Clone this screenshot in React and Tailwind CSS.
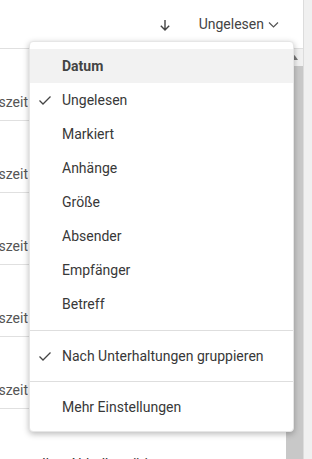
import React from 'react';

const rows = [0, 1, 2, 3, 4];

const menuItems = [
  { label: 'Datum', active: true },
  { label: 'Ungelesen', checked: true },
  { label: 'Markiert' },
  { label: 'Anhänge' },
  { label: 'Größe' },
  { label: 'Absender' },
  { label: 'Empfänger' },
  { label: 'Betreff' },
];

function Check() {
  return (
    <svg width="14" height="14" viewBox="0 0 14 14" className="absolute left-[8px] top-1/2 -translate-y-1/2">
      <path d="M1.5 7.5 L5 11 L12.5 3.5" fill="none" stroke="#444" strokeWidth="1.3" />
    </svg>
  );
}

function MenuItem({ label, active, checked }) {
  return (
    <div
      className={
        'relative h-[34px] flex items-center pl-[32px] text-[14px] ' +
        (active ? 'bg-[#f2f2f2] font-bold text-[#444]' : 'text-[#383838]')
      }
    >
      {checked && <Check />}
      {label}
    </div>
  );
}

export default function App() {
  return (
    <div
      className="relative h-[459px] w-[312px] overflow-hidden bg-white flex"
      style={{ fontFamily: 'Roboto, "Liberation Sans", sans-serif' }}
    >
      {/* Main column */}
      <div className="flex-1 flex flex-col min-w-0">
        {/* Header */}
        <div className="h-[49px] shrink-0 border-b border-[#e0e0e0] flex items-center justify-end pr-[24px] text-[14px] text-[#444]">
          <svg width="12" height="12" viewBox="0 0 12 12" className="mr-[28px] mt-[1px]">
            <path d="M6 1 V11 M1.8 6.8 L6 11 L10.2 6.8" fill="none" stroke="#444" strokeWidth="1.4" />
          </svg>
          <span>Ungelesen</span>
          <svg width="11" height="11" viewBox="0 0 11 11" className="ml-[4px] mt-[1px]">
            <path d="M1 3.5 L5.5 8 L10 3.5" fill="none" stroke="#555" strokeWidth="1.2" />
          </svg>
        </div>

        {/* Body */}
        <div className="flex-1 flex min-h-0">
          <div className="flex-1 flex flex-col">
            {rows.map((r) => (
              <div key={r} className="h-[72px] shrink-0 border-b border-[#e0e0e0] flex items-end pb-[8px]">
                <div className="w-[28px] overflow-hidden flex justify-end whitespace-nowrap text-[14px] leading-[20px] text-[#555]">
                  Bearbeitungszeit
                </div>
              </div>
            ))}
            <div className="pl-[42px] pt-[45px] text-[14px] leading-[20px] text-[#333] whitespace-nowrap">
              Ihre Abholbestätigung
            </div>
          </div>

          {/* Scrollbar */}
          <div className="w-[17px] shrink-0 flex flex-col bg-[#f1f1f1]">
            <div className="h-[17px] flex items-center justify-center">
              <svg width="7" height="5" viewBox="0 0 7 5">
                <path d="M0 5 L3.5 0 L7 5 Z" fill="#777" />
              </svg>
            </div>
            <div className="flex-1 bg-[#c8c8c8]" />
          </div>
        </div>
      </div>

      {/* Right panel */}
      <div className="w-[9px] shrink-0 border-l border-[#dcdcdc] bg-[#f0f0f0]" />

      {/* Dropdown menu */}
      <div className="absolute left-[29px] top-[41px] w-[265px] bg-white rounded-[4px] border border-[#e6e6e6] shadow-[0_2px_6px_rgba(0,0,0,0.28)] pt-[7px] pb-[7px]">
        {menuItems.map((m) => (
          <MenuItem key={m.label} {...m} />
        ))}
        <div className="mt-[9px] mb-[8px] border-t border-[#dedede]" />
        <MenuItem label="Nach Unterhaltungen gruppieren" checked />
        <div className="mt-[8px] mb-[8px] border-t border-[#dedede]" />
        <MenuItem label="Mehr Einstellungen" />
      </div>
    </div>
  );
}
